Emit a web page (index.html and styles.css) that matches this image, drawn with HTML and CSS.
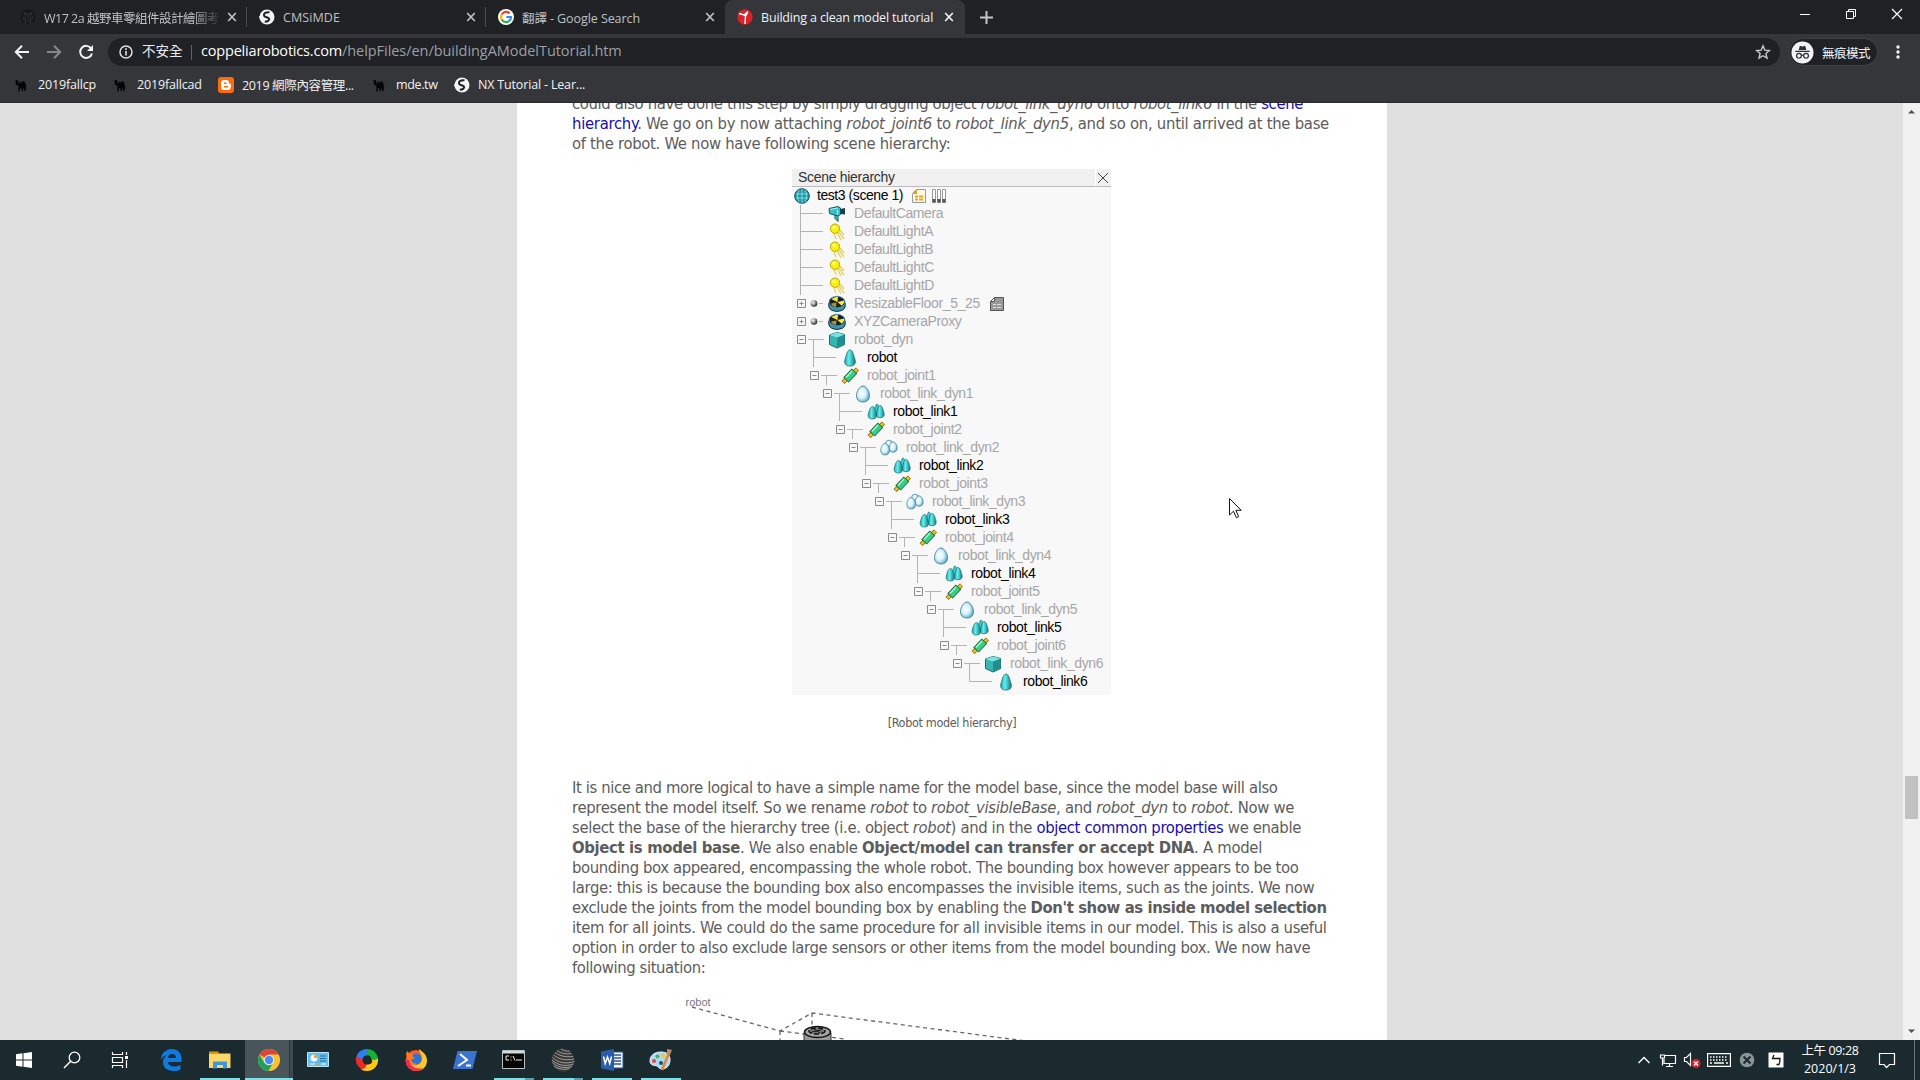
FILE: index.html
```html
<!DOCTYPE html>
<html lang="zh-Hant">
<head>
<meta charset="utf-8">
<title>Building a clean model tutorial</title>
<link rel="stylesheet" href="styles.css">
</head>
<body>
<svg class="defs" aria-hidden="true">
  <defs>
    <linearGradient id="gTeal" x1="0" x2="1"><stop offset="0" stop-color="#2aa9ab"/><stop offset=".4" stop-color="#5ff0ee"/><stop offset="1" stop-color="#15797f"/></linearGradient>
    <radialGradient id="gEgg" cx=".4" cy=".45" r=".65"><stop offset="0" stop-color="#fff"/><stop offset=".5" stop-color="#d6f1fa"/><stop offset="1" stop-color="#3f9cc0"/></radialGradient>
    <radialGradient id="gBall" cx=".35" cy=".35" r=".7"><stop offset="0" stop-color="#fff"/><stop offset="1" stop-color="#222"/></radialGradient>
    <symbol id="close" viewBox="0 0 10 10"><path d="M1.2 1l7.6 8M8.800 1l-7.600 8" stroke="currentColor" stroke-width="1.700" fill="none"/></symbol>
    <symbol id="globe" viewBox="0 0 16 16"><circle cx="8" cy="8" r="7.500" fill="#f1f3f4"/><path d="M10.500 3.200C7 2.800 4.500 4.300 5 6.500c.4 1.800 4 1.500 5 3 .8 1.500-1 3-4.500 3.300" stroke="#202124" stroke-width="2" fill="none"/><path d="M0 7l4 1 2 3-1 3.500C2 13 .5 10 0 7z" fill="#f1f3f4"/></symbol>
    <symbol id="camel" viewBox="0 0 16 16"><path d="M1 3l3-1 1 2v3l2-3 2 1 2-2 2 3 1 4-1 5h-1l-1-4-1 4H9l-1-4-1 1-1 4H5V9L2 7V4z" fill="#050505"/></symbol>

    <symbol id="leaf" viewBox="0 0 30 18"><path d="M5.500 0v18M5.500 8.500H28" stroke="#b4b4b4" fill="none"/></symbol>
    <symbol id="end" viewBox="0 0 30 18"><path d="M5.500 0v8.500H28" stroke="#b4b4b4" fill="none"/></symbol>
    <symbol id="open" viewBox="0 0 30 18"><path d="M13 8.500H29M18.500 8.500V18" stroke="#b4b4b4" fill="none"/><path d="M2.500 4.500h8v8h-8zM4.500 8.500h4" stroke="#8a8a8a" fill="none"/></symbol>
    <symbol id="shut" viewBox="0 0 30 18"><path d="M24 8.500h4" stroke="#b4b4b4"/><path d="M2.500 4.500h8v8h-8zM4.500 8.500h4M6.500 6.500v4" stroke="#8a8a8a" fill="none"/><circle cx="19" cy="8.500" r="3.300" fill="url(#gBall)"/></symbol>

    <symbol id="camera" viewBox="0 0 18 18"><path d="M1 3.500l9-2 2.500 1.500v6.500L9.500 11 1.500 8.500z" fill="#3bbdc9" stroke="#145c66"/><path d="M12.500 4L17 3v6.500L12.500 9z" fill="#1a3e46"/><path d="M7 10v3.500l3 3V11z" fill="#3bbdc9" stroke="#145c66"/><path d="M2 4.500l8-1.500M9.500 5v5" stroke="#a9f2f4"/></symbol>
    <symbol id="light" viewBox="0 0 18 18"><path d="M6 11l2 5M9 9l4 8M11 9l5 7M12 7l4 5" stroke="#e7d05a" stroke-width="1.300"/><circle cx="7" cy="5.700" r="4.700" fill="#fff000" stroke="#aaa000" stroke-width=".9"/><circle cx="6" cy="4.500" r="1.600" fill="#ffffb0"/></symbol>
    <symbol id="dummy" viewBox="0 0 18 18"><path d="M.8 8v3.500c1 6.500 15.400 6.500 16.400 0V8z" fill="#3d93b5" stroke="#12303a"/><ellipse cx="9" cy="7" rx="8" ry="5.800" fill="#1b2226" stroke="#4a9cb8" stroke-width=".7"/><path d="M9.500 7L3.500 4.300C5 2.600 7.500 2 10 2z" fill="#ffe63a"/><path d="M9.500 7l6.500-1.500c.7 2.500-1 4-2.500 5z" fill="#ffe63a"/><path d="M8.500 7.500L3 8.500c.5 1.700 2 3 5 3.500z" fill="#ffe63a" opacity=".6"/></symbol>
    <symbol id="cube" viewBox="0 0 18 18"><path d="M1.500 4L9 1.500 16.500 3.500v10L9 17l-7.500-3.500z" fill="#36b5b2" stroke="#1b6d6d"/><path d="M9 6.500L16.500 3.500v10L9 17z" fill="#238e8e"/><path d="M1.500 4L9 1.500l7.500 2L9 6.500z" fill="#7be6e0"/></symbol>
    <symbol id="cone" viewBox="0 0 18 18"><path d="M9 1c2.500 0 3.300 4 5 9.500 1.200 4.500-1 6.500-5 6.500s-6.200-2-5-6.500C5.700 5 6.500 1 9 1z" fill="url(#gTeal)" stroke="#176a70" stroke-width=".8"/></symbol>
    <symbol id="cones" viewBox="0 0 18 18"><path d="M9.500 1c2 0 2 2 3 6l-3 4-3-3z" fill="#3fc9cb" stroke="#176a70" stroke-width=".6"/><path d="M13 2.500c2 0 3 3.500 4 7.500.7 3.200-1 4.700-4 4.700S9 13.200 9.700 10c1-4 1.500-7.500 3.300-7.500z" fill="url(#gTeal)" stroke="#176a70" stroke-width=".7"/><path d="M5.500 3.500c2 0 2.800 3.500 3.900 7.500.7 3.500-.9 5-3.900 5S.6 14.500 1.300 11c1-4 2.200-7.500 4.200-7.500z" fill="url(#gTeal)" stroke="#176a70" stroke-width=".7"/></symbol>
    <symbol id="egg" viewBox="0 0 18 18"><path d="M9 1c3.200 0 6.500 5.300 6.500 9.500S13 17 9 17s-6.500-2.300-6.500-6.500S5.800 1 9 1z" fill="url(#gEgg)" stroke="#46849c" stroke-width=".9"/></symbol>
    <symbol id="eggs" viewBox="0 0 18 18"><circle cx="9" cy="4.500" r="3.300" fill="url(#gEgg)" stroke="#46849c" stroke-width=".7"/><path d="M13.200 2.800c2 0 4 3.500 4 6.200s-1.700 4.300-4 4.300-4-1.600-4-4.300 2-6.200 4-6.200z" fill="url(#gEgg)" stroke="#46849c" stroke-width=".7"/><path d="M5.200 4.300c2.200 0 4.400 3.700 4.400 6.900s-1.800 4.800-4.400 4.800-4.400-1.600-4.400-4.800 2.200-6.900 4.400-6.900z" fill="url(#gEgg)" stroke="#46849c" stroke-width=".7"/></symbol>
    <symbol id="joint" viewBox="0 0 18 18"><path d="M2 15.500L16.500 2" stroke="#7a5a10" stroke-width="4.200"/><path d="M2.300 15.200L16.200 2.200" stroke="#f2c321" stroke-width="2.600"/><path d="M5 13L13.500 4" stroke="#1b5b3c" stroke-width="7.500"/><path d="M5.600 12.400L13 4.600" stroke="#35cf86" stroke-width="5.800"/><path d="M5 10.500L11 4" stroke="#a5f5cb" stroke-width="1.400"/></symbol>
  </defs>
</svg>

<header class="browser">
  <div class="tabs">
    <div class="tab">
      <svg class="fav" viewBox="0 0 16 16"><circle cx="8" cy="8" r="7.500" fill="#15171a"/><path d="M5.500 15v-3c-2.500 0-2-2-3-2.500M10.500 15v-3.500C13 11 13 6 11.500 5.500V3.500L9.500 4.500h-3l-2-1v2C3 6 3 11 6 11.500" fill="#202124" stroke="#303134"/></svg>
      <span class="title t1">W17 2a 越野車零組件設計繪圖考</span><svg class="x"><use href="#close"/></svg>
    </div>
    <div class="tab">
      <svg class="fav"><use href="#globe"/></svg>
      <span class="title">CMSiMDE</span><svg class="x"><use href="#close"/></svg>
    </div>
    <div class="tab last">
      <svg class="fav" viewBox="0 0 16 16"><circle cx="8" cy="8" r="8" fill="#fff"/><g fill="none" stroke-width="2.200"><path d="M11.600 4.400A5 5 0 0 0 3.800 5.300" stroke="#ea4335"/><path d="M3.800 5.300a5 5 0 0 0 0 5.400" stroke="#fbbc05"/><path d="M3.800 10.700a5 5 0 0 0 7.500 1.100" stroke="#34a853"/><path d="M11.300 11.800A5 5 0 0 0 13 8H8.300" stroke="#4285f4"/></g></svg>
      <span class="title t3">翻譯 - Google Search</span><svg class="x"><use href="#close"/></svg>
    </div>
    <div class="tab active">
      <svg class="fav" viewBox="0 0 16 16"><circle cx="8" cy="8" r="7.700" fill="#d8232a"/><path d="M2 4.500l5 1.500 4-3.500M7 6l1.500 1L8 15M8.500 7l2-3" stroke="#fff" stroke-width="1.400" fill="none"/></svg>
      <span class="title t4">Building a clean model tutorial</span><svg class="x"><use href="#close"/></svg>
    </div>
    <svg class="plus" viewBox="0 0 13 13"><path d="M6.500 0v13M0 6.500h13" stroke="#c3c5c8" stroke-width="2"/></svg>
    <div class="win">
      <svg viewBox="0 0 46 28"><path d="M18 14.500h10" stroke="#fff"/></svg>
      <svg viewBox="0 0 46 28"><path d="M18.500 11.500h7v7h-7zM20.500 11v-1.500h7v7H26" stroke="#fff" fill="none"/></svg>
      <svg viewBox="0 0 46 28"><path d="M18 9l10 10M28 9L18 19" stroke="#fff" stroke-width="1.200"/></svg>
    </div>
  </div>
  <div class="toolbar">
    <svg class="nav" viewBox="0 0 16 16"><path d="M15 8H2M8 1.800L1.800 8 8 14.200" stroke="#f1f3f4" stroke-width="2" fill="none"/></svg>
    <svg class="nav" viewBox="0 0 16 16"><path d="M1 8h13M8 1.800L14.200 8 8 14.200" stroke="#85878a" stroke-width="2" fill="none"/></svg>
    <svg class="nav" viewBox="0 0 16 16"><path d="M13.200 4.500A6 6 0 1 0 14 9.500" stroke="#f1f3f4" stroke-width="2" fill="none"/><path d="M15 1v6H9z" fill="#f1f3f4"/></svg>
    <div class="omni">
      <svg class="info" viewBox="0 0 14 14"><circle cx="7" cy="7" r="6" stroke="#dfe1e5" stroke-width="1.500" fill="none"/><path d="M7 6v4.500M7 3.300v1.600" stroke="#dfe1e5" stroke-width="1.600"/></svg>
      <span class="warn">不安全</span><i class="bar"></i>
      <span class="host">coppeliarobotics.com</span><span class="path">/helpFiles/en/buildingAModelTutorial.htm</span>
      <svg class="star" viewBox="0 0 16 16"><path d="M8 1.800l1.800 4.300 4.600.4-3.500 3 1.100 4.600L8 11.700l-4 2.400 1.100-4.600-3.500-3 4.600-.4z" stroke="#c7c9cc" stroke-width="1.400" fill="none"/></svg>
    </div>
    <div class="incog">
      <svg viewBox="0 0 24 24"><circle cx="12" cy="12" r="11.500" fill="#f1f3f4"/><path d="M8 9.500L9.200 5l2.800.8 2.800-.8L16 9.500zM4.500 10.300h15v1.200h-15z" fill="#303134"/><g fill="none" stroke="#303134" stroke-width="1.300"><circle cx="8.300" cy="15.500" r="2.500"/><circle cx="15.700" cy="15.500" r="2.500"/><path d="M10.800 15c.8-.5 1.600-.5 2.400 0"/></g></svg>
      <span>無痕模式</span>
    </div>
    <svg class="dots" viewBox="0 0 4 14"><circle cx="2" cy="2" r="1.700"/><circle cx="2" cy="7" r="1.700"/><circle cx="2" cy="12" r="1.700"/></svg>
  </div>
  <nav class="bookmarks">
    <a><svg class="cm"><use href="#camel"/></svg><span>2019fallcp</span></a>
    <a><svg class="cm"><use href="#camel"/></svg><span>2019fallcad</span></a>
    <a><svg viewBox="0 0 16 16"><rect width="16" height="16" rx="3" fill="#ff6a0b"/><path d="M6 3h2.500C10.500 3 11 4 11 6.500c1.500 0 2 .5 2 2 0 3-1 4.500-3 4.500H6c-2 0-3-1-3-3V6c0-2 1-3 3-3z" fill="#fff"/><path d="M6 6.300h2.500M6 9.800h4" stroke="#ff6a0b" stroke-width="1.400"/></svg><span class="cjk">2019 網際內容管理...</span></a>
    <a><svg class="cm"><use href="#camel"/></svg><span class="mde">mde.tw</span></a>
    <a><svg><use href="#globe"/></svg><span>NX Tutorial - Lear...</span></a>
  </nav>
</header>

<main class="view">
  <article class="page">
    <div class="para">
      <p class="a1">could also have done this step by simply dragging object <i>robot_link_dyn6</i> onto <i>robot_link6</i> in the <a>scene</a></p>
      <p class="a2"><a>hierarchy</a>. We go on by now attaching <i>robot_joint6</i> to <i>robot_link_dyn5</i>, and so on, until arrived at the base</p>
      <p class="a3">of the robot. We now have following scene hierarchy:</p>
    </div>
    <section class="panel">
      <div class="phead"><span>Scene hierarchy</span><svg viewBox="0 0 16 17"><path d="M0 17V0" stroke="#fff" stroke-width="2"/><path d="M3 4l10 10M13 4L3 14" stroke="#444"/></svg></div>
      <div class="scene">
        <svg viewBox="0 0 16 16"><circle cx="8" cy="8" r="7.300" fill="#229aaa" stroke="#14525e"/><path d="M2 6h12M2 10h12M8 1v14M5 2C3 6 3 10 5 14M11 2c2 4 2 8 0 12" stroke="#a5eef0" stroke-width=".7" fill="none"/></svg>
        <span>test3 (scene 1)</span>
        <svg class="note" viewBox="0 0 14 14"><path d="M4.500.5h9v13H.5v-9z" fill="#fff8e0" stroke="#999"/><path d="M5 .5v4.500H.5z" fill="#e89a1c"/><path d="M3 7.500h3m1 0h4M3 10.500h3m1 0h4" stroke="#eba21f" stroke-width="1.800"/></svg>
        <svg class="note" viewBox="0 0 14 14"><path d="M.5.500h3v13h-3zM5.500.500h3v13h-3zM10.500.500h3v13h-3z" fill="#fff" stroke="#999"/><path d="M.5 10h3v3.500h-3zM5.500 10h3v3.500h-3zM10.500 10h3v3.500h-3z" fill="#555"/></svg>
      </div>
      <ul class="tree">
        <li class="row"><svg class="g"><use href="#leaf"/></svg><svg class="ic"><use href="#camera"/></svg><span>DefaultCamera</span></li>
        <li class="row"><svg class="g"><use href="#leaf"/></svg><svg class="ic"><use href="#light"/></svg><span>DefaultLightA</span></li>
        <li class="row"><svg class="g"><use href="#leaf"/></svg><svg class="ic"><use href="#light"/></svg><span>DefaultLightB</span></li>
        <li class="row"><svg class="g"><use href="#leaf"/></svg><svg class="ic"><use href="#light"/></svg><span>DefaultLightC</span></li>
        <li class="row"><svg class="g"><use href="#leaf"/></svg><svg class="ic"><use href="#light"/></svg><span>DefaultLightD</span></li>
        <li class="row"><svg class="g"><use href="#shut"/></svg><svg class="ic"><use href="#dummy"/></svg><span class="wide">ResizableFloor_5_25</span><svg class="note script" viewBox="0 0 14 14"><path d="M4.500.5h9v13H.5v-9z" fill="#999" stroke="#555"/><path d="M4.500.5v4h-4z" fill="#fff" stroke="#555"/><path d="M3 7.500h3m1 0h4M3 10.500h3m1 0h4" stroke="#ddd"/></svg></li>
        <li class="row"><svg class="g"><use href="#shut"/></svg><svg class="ic"><use href="#dummy"/></svg><span>XYZCameraProxy</span></li>
        <li class="row"><svg class="g"><use href="#open"/></svg><svg class="ic"><use href="#cube"/></svg><span>robot_dyn</span></li>
        <li class="row vis d1"><svg class="g"><use href="#leaf"/></svg><svg class="ic"><use href="#cone"/></svg><span>robot</span></li>
        <li class="row d1"><svg class="g"><use href="#open"/></svg><svg class="ic"><use href="#joint"/></svg><span>robot_joint1</span></li>
        <li class="row d2"><svg class="g"><use href="#open"/></svg><svg class="ic"><use href="#egg"/></svg><span>robot_link_dyn1</span></li>
        <li class="row vis d3"><svg class="g"><use href="#leaf"/></svg><svg class="ic"><use href="#cones"/></svg><span>robot_link1</span></li>
        <li class="row d3"><svg class="g"><use href="#open"/></svg><svg class="ic"><use href="#joint"/></svg><span>robot_joint2</span></li>
        <li class="row d4"><svg class="g"><use href="#open"/></svg><svg class="ic"><use href="#eggs"/></svg><span>robot_link_dyn2</span></li>
        <li class="row vis d5"><svg class="g"><use href="#leaf"/></svg><svg class="ic"><use href="#cones"/></svg><span>robot_link2</span></li>
        <li class="row d5"><svg class="g"><use href="#open"/></svg><svg class="ic"><use href="#joint"/></svg><span>robot_joint3</span></li>
        <li class="row d6"><svg class="g"><use href="#open"/></svg><svg class="ic"><use href="#eggs"/></svg><span>robot_link_dyn3</span></li>
        <li class="row vis d7"><svg class="g"><use href="#leaf"/></svg><svg class="ic"><use href="#cones"/></svg><span>robot_link3</span></li>
        <li class="row d7"><svg class="g"><use href="#open"/></svg><svg class="ic"><use href="#joint"/></svg><span>robot_joint4</span></li>
        <li class="row d8"><svg class="g"><use href="#open"/></svg><svg class="ic"><use href="#egg"/></svg><span>robot_link_dyn4</span></li>
        <li class="row vis d9"><svg class="g"><use href="#leaf"/></svg><svg class="ic"><use href="#cones"/></svg><span>robot_link4</span></li>
        <li class="row d9"><svg class="g"><use href="#open"/></svg><svg class="ic"><use href="#joint"/></svg><span>robot_joint5</span></li>
        <li class="row d10"><svg class="g"><use href="#open"/></svg><svg class="ic"><use href="#egg"/></svg><span>robot_link_dyn5</span></li>
        <li class="row vis d11"><svg class="g"><use href="#leaf"/></svg><svg class="ic"><use href="#cones"/></svg><span>robot_link5</span></li>
        <li class="row d11"><svg class="g"><use href="#open"/></svg><svg class="ic"><use href="#joint"/></svg><span>robot_joint6</span></li>
        <li class="row d12"><svg class="g"><use href="#open"/></svg><svg class="ic"><use href="#cube"/></svg><span>robot_link_dyn6</span></li>
        <li class="row vis d13"><svg class="g"><use href="#end"/></svg><svg class="ic"><use href="#cone"/></svg><span>robot_link6</span></li>
      </ul>
    </section>
    <p class="caption">[Robot model hierarchy]</p>
    <div class="para">
      <p class="b1">It is nice and more logical to have a simple name for the model base, since the model base will also</p>
      <p class="b2">represent the model itself. So we rename <i>robot</i> to <i>robot_visibleBase</i>, and <i>robot_dyn</i> to <i>robot</i>. Now we</p>
      <p class="b3">select the base of the hierarchy tree (i.e. object <i>robot</i>) and in the <a>object common properties</a> we enable</p>
      <p class="b4"><b class="s1">Object is model base</b>. We also enable <b class="s2">Object/model can transfer or accept DNA</b>. A model</p>
      <p class="b5">bounding box appeared, encompassing the whole robot. The bounding box however appears to be too</p>
      <p class="b5">large: this is because the bounding box also encompasses the invisible items, such as the joints. We now</p>
      <p class="b5">exclude the joints from the model bounding box by enabling the <b class="s3">Don't show as inside model selection</b></p>
      <p class="b6">item for all joints. We could do the same procedure for all invisible items in our model. This is also a useful</p>
      <p class="b3">option in order to also exclude large sensors or other items from the model bounding box. We now have</p>
      <p class="b7">following situation:</p>
    </div>
    <svg class="robot" viewBox="685 990 400 60">
      <text x="685.500" y="1006">robot</text>
      <g fill="none" stroke="#666" stroke-width="1.300" stroke-dasharray="4 3.500"><path d="M692 1007L780 1031 812 1013 1022 1040.500M780 1031l65 8M812 1013v14M780 1031v12"/></g>
      <path d="M804 1033v17h27v-17z" fill="#999" stroke="#333"/><ellipse cx="817.500" cy="1032" rx="13" ry="5.500" fill="#a5a5a5" stroke="#111" stroke-width="1.500"/><ellipse cx="817" cy="1031" rx="8" ry="3" fill="#777" stroke="#111" stroke-width="1.500" stroke-dasharray="5 2"/><path d="M812 1032l9-2M814 1029l6 4" stroke="#111"/>
    </svg>
  </article>
  <div class="scroll"><svg class="arr" viewBox="0 0 17 17"><path d="M5 10.500h7L8.500 7z" fill="#505050"/></svg><i class="thumb"></i><svg class="arr" viewBox="0 0 17 17"><path d="M5 6.500h7L8.500 10z" fill="#505050"/></svg></div>
</main>

<footer class="taskbar">
  <div class="slot sys"><svg viewBox="0 0 24 24"><path d="M4 6.300l6.500-1V11.500H4zM11.500 5.200L20 4v7.500h-8.500zM4 12.500h6.500v6.200L4 17.800zM11.500 12.500H20V20l-8.500-1.200z" fill="#fff"/></svg></div>
  <div class="slot sys"><svg viewBox="0 0 24 24"><circle cx="14.500" cy="9.500" r="5.300" stroke="#fff" stroke-width="1.300" fill="none"/><path d="M10.700 13.300L4 20" stroke="#fff" stroke-width="1.500"/></svg></div>
  <div class="slot sys"><svg viewBox="0 0 24 24"><path d="M4.500 4v2.500h10V4M4.500 20v-2.500h10V20M4.500 9.500h10v5h-10zM18.500 4v3M18.500 12v8" stroke="#fff" stroke-width="1.200" fill="none"/><path d="M17 8h3v3h-3z" fill="#fff"/></svg></div>
  <div class="slot edge"><svg viewBox="0 0 24 24"><path d="M2 12C2 5 7 1 13 1c6 0 9.500 4.500 9.500 9.500V14H9c.3 3 3 4.500 6.500 4.500 2.500 0 4.500-.7 6-1.500v4.500c-2 1-4.500 1.500-7 1.500C8 23 4 19.500 4 14c0-3 1.500-5.500 4-7-3 .7-5 2.500-6 5zM9 10h8c0-2.500-1.500-4-4-4-2.300 0-3.700 1.700-4 4z" fill="#0f7be0"/></svg></div>
  <div class="slot on"><svg viewBox="0 0 24 24"><path d="M1 3.500h9l1.500 2H1z" fill="#d99a10"/><path d="M1 5.500h21.500V20H1z" fill="#fbd66b"/><path d="M5 20.500v-7h14v7h-4v-3.500H9v3.500z" fill="#3e97d8"/></svg></div>
  <div class="slot active"><svg viewBox="0 0 24 24"><circle cx="12" cy="12" r="11" fill="#fbc22b"/><path d="M12 12L2.500 6.500A11 11 0 0 1 21.500 6.500H12z" fill="#dc4437"/><path d="M12 12l-4.700 3L2.500 6.500A11 11 0 0 0 11.500 23l5-8z" fill="#1da160"/><path d="M12 7h9.700c2.500 7-1.700 15-10 16L16 15z" fill="#fbc22b"/><circle cx="12" cy="12" r="5.200" fill="#eee"/><circle cx="12" cy="12" r="4.200" fill="#4a8cf5"/></svg></div>
  <div class="slot"><svg viewBox="0 0 24 24"><path d="M1.500 4.500h21v14h-21z" fill="#5fbdf0" stroke="#bfe6fb"/><circle cx="8" cy="10" r="3.500" fill="#f5f9fc"/><path d="M8 10V6.500A3.500 3.500 0 0 1 11.500 10z" fill="#f2a33a"/><path d="M14 8h6M14 10.500h6M14 13h6" stroke="#2d6e9e"/><path d="M4 16h5M15 16h5" stroke="#fff"/><path d="M10 16h3" stroke="#f2a33a"/></svg></div>
  <div class="slot"><svg viewBox="0 0 24 24"><path d="M12 12L3 18A11 11 0 0 1 1 9l5-2z" fill="#ee2a24"/><path d="M3 17.500A11 11 0 0 0 12 23l4-6-9-9-6 2z" fill="#ee2a24"/><path d="M1.500 9C2.500 4 7 1 12 1l3 6-7 2-1 5C6 10 4 8.500 1.500 9z" fill="#2f7df6"/><path d="M11 1c6-.5 11 3.500 12 9l-5 7-2-6c0-3-2-4-5-4 2-2 2-4 0-6z" fill="#16b035"/><path d="M23 10c1 7-4 13-11 13-3 0-5-1-6-2 4 0 5-2 5.500-4.500 4 .5 6-1 6-5 2 1 4 .5 5.500-1.500z" fill="#ffc814"/><circle cx="12" cy="12" r="4.500" fill="#1a2a2f"/></svg></div>
  <div class="slot"><svg viewBox="0 0 24 24"><circle cx="12" cy="12.500" r="10.500" fill="#ff5a1f"/><path d="M12 23c6 0 11-4 11-10.500 0-4-2-7-5-9L15 1c0 4 3 5 3 9s-3 7-6 7-6-2-8-5c0 6 3 11 8 11z" fill="#ffc62b"/><circle cx="12" cy="11" r="5.500" fill="#2876d8"/><path d="M2 6l1-3 3 3 4-1-2 3 3 2-4 2 2 3 4 1c-4 3-9 0-9.500-5z" fill="#ff7a20"/><path d="M1.500 12C2 19 7 23 12 23c3 0 5-1 7-3-8 2-13-2-14-8z" fill="#f5294c"/></svg></div>
  <div class="slot"><svg viewBox="0 0 24 24"><path d="M4.500 3H24l-4.500 18H0z" fill="#3a74d0"/><path d="M7 6l7 6-9 6M13 17.500h5" stroke="#fff" stroke-width="2" fill="none"/></svg></div>
  <div class="slot on split"><svg viewBox="0 0 24 24"><path d="M.5 2.500h22v18h-22z" fill="#050505" stroke="#b9c0c4"/><path d="M1 3h21v2.500H1z" fill="#d5dadc"/><path d="M7 8H4v4h3M9 8.500v1m0 2v1M11 8l2 4.500M14 12h6" stroke="#eee" fill="none"/></svg></div>
  <div class="slot on split"><svg viewBox="0 0 24 24"><circle cx="12" cy="12" r="11.500" fill="#383838"/><g fill="none" stroke="#b9b9b9" stroke-width=".8"><path d="M4 4.500c4 3 10 5 18 4M2.500 7c5 4 12 6 20.500 4M1.500 9.500c5 5 13 7 22 4M1 12c5 5 13 7 21.500 4M1.500 14.500c5 5 12 6 19.500 4M3 18c4 3 9 4 15.500 2.500M6 2.500c4 3 9 4 14 3M10 1c3 2 6 2.500 8.500 2"/></g></svg></div>
  <div class="slot on"><svg viewBox="0 0 24 24"><path d="M12 4h11v16H12z" fill="#f5f7fb" stroke="#2b579a"/><path d="M14 7h7M14 10h7M14 13h7M14 16h7" stroke="#2b579a" stroke-width="1.400"/><path d="M1 3.500L14 1v22L1 20.500z" fill="#2a5caa"/><path d="M3.500 8.500l1.700 7L7.500 9l2.200 6.500 1.800-7" stroke="#fff" stroke-width="1.500" fill="none"/></svg></div>
  <div class="slot on"><svg viewBox="0 0 24 24"><path d="M1 13C1 7 6 4 12 4c6 0 9 3 9 8s-3 9-8 9c-3 0-3-2-5-3s-7 0-7-5z" fill="#a9d9f3" stroke="#e8f6fd"/><circle cx="5" cy="13" r="2" fill="#e14a3b"/><circle cx="8.500" cy="8.500" r="2" fill="#59b04c"/><circle cx="14" cy="7.500" r="2" fill="#f3c52e"/><circle cx="12" cy="15" r="2" fill="#24506c"/><path d="M20 5l-7 17" stroke="#e8842a" stroke-width="2.500"/><path d="M18 1l5 1-2 5-3-1z" fill="#b98c63"/></svg></div>
  <div class="tray">
    <svg class="w14" viewBox="0 0 14 14"><path d="M1.500 10L7 4.500l5.500 5.500" stroke="#fff" stroke-width="1.400" fill="none"/></svg>
    <svg class="w18 net" viewBox="0 0 18 18"><path d="M6 4.500h10.500v8H5V8M10.500 12.500v3M7 15.500h7M1.500 4h4v3h-4zM3.500 7v7.500" stroke="#fff" stroke-width="1.200" fill="none"/></svg>
    <svg class="w18 vol" viewBox="0 0 18 18"><path d="M1.500 6.500h2l4-4v12l-4-4h-2z" stroke="#fff" stroke-width="1.200" fill="none"/><circle cx="13" cy="12.500" r="4.500" fill="#e0202c"/><path d="M11 10.500l4 4M15 10.500l-4 4" stroke="#fff" stroke-width="1.300"/></svg>
    <svg class="kb" viewBox="0 0 24 14"><path d="M.6.600h22.800v12.800H.6z" stroke="#fff" stroke-width="1.200" fill="none"/><path d="M3 4h18M3 7h18" stroke="#fff" stroke-width="1.500" stroke-dasharray="1.500 1.500"/><path d="M3 10h2m2 0h10m2 0h2" stroke="#fff" stroke-width="1.300"/></svg>
    <svg class="w16 off" viewBox="0 0 16 16"><circle cx="8" cy="8" r="7.300" fill="#8d9496"/><path d="M4.500 4.500l7 7M11.500 4.500l-7 7" stroke="#1d2a2f" stroke-width="2"/></svg>
    <svg class="w16 ime" viewBox="0 0 16 16"><path d="M.5.500h15v15H.5z" fill="#fff"/><path d="M6 3L4.500 6.500H12c0 3-.3 5-1 6H8.500" stroke="#111" stroke-width="1.300" fill="none"/></svg>
    <div class="clock"><span class="time">上午 09:28</span><span>2020/1/3</span></div>
    <svg class="w18 act" viewBox="0 0 18 18"><path d="M1.500 2.500h15v11h-5L8.500 16.500 6 13.500H1.500z" stroke="#fff" stroke-width="1.200" fill="none"/></svg>
  </div>
</footer>
<svg class="cursor" viewBox="0 0 14 21"><path d="M.5.500v16.500l4-3.800 2.800 6.500 2.400-1-2.800-6.400h5.300z" fill="#fff" stroke="#111"/></svg>
</body>
</html>
```
FILE: styles.css
```css
* { box-sizing: border-box; }
body { margin: 0; width: 1920px; height: 1080px; overflow: hidden; display: flex; flex-direction: column; background: #e0e0e0; font-family: "Open Sans", "Noto Sans CJK TC", sans-serif; font-size: 12.5px; }
p, ul { margin: 0; padding: 0; }
svg { flex: none; display: block; }
.defs { position: absolute; width: 0; height: 0; }

.browser { height: 103px; flex: none; background: #35363a; border-bottom: 1px solid #28292c; }
.tabs { height: 34px; display: flex; align-items: center; background: #202124; padding-left: 8px; }
.tab { width: 239px; height: 34px; display: flex; align-items: center; padding: 0 10px 0 12px; background: linear-gradient(#4a4c50, #4a4c50) right center / 1px 20px no-repeat; color: #bdc1c6; }
.tab.last { background: none; }
.tab.active { width: 240px; background: #35363a; color: #f1f3f4; border-radius: 8px 8px 0 0; padding-right: 11px; }
.fav { width: 16px; height: 16px; }
.title { flex: 1; margin-left: 8px; white-space: nowrap; overflow: hidden; letter-spacing: .08px; }
.t1 { letter-spacing: -.5px; -webkit-mask-image: linear-gradient(90deg, #000 150px, transparent 178px); }
.t3 { letter-spacing: -.08px; }
.t4 { letter-spacing: -.17px; }
.x { width: 10px; height: 10px; }
.plus { width: 13px; height: 13px; margin-left: 15px; }
.win { margin-left: auto; display: flex; align-self: flex-start; }
.win svg { width: 46px; height: 28px; }

.toolbar { height: 36px; display: flex; align-items: center; padding-left: 14px; }
.nav { width: 16px; height: 16px; margin-right: 16px; }
.omni { width: 1672px; height: 28px; margin-left: -2px; border-radius: 14px; background: #202124; display: flex; align-items: center; padding: 0 9px 0 11px; font-size: 14.5px; line-height: 20px; color: #e8eaed; }
.omni span { margin-top: -2px; }
.info { width: 14px; height: 14px; }
.omni .warn { margin-left: 9px; font-size: 13.5px; width: 41px; }
.bar { width: 1px; height: 15px; background: #5f6368; margin: 0 9px 0 8px; }
.host { letter-spacing: -.19px; color: #fff; }
.path { letter-spacing: -.05px; color: #9aa0a6; }
.star { width: 16px; height: 16px; margin-left: auto; }
.incog { width: 89px; height: 28px; margin-left: 9px; border: 1px solid #3f4044; border-radius: 14px; background: #202124; display: flex; align-items: center; gap: 8px; color: #f1f3f4; letter-spacing: -.5px; padding-left: 1px; }
.incog svg { width: 23px; height: 23px; }
.dots { width: 4px; height: 14px; margin-left: 18px; fill: #f1f3f4; }

.bookmarks { height: 29px; display: grid; grid-template-columns: 99px 105px 154px 82px 160px; align-items: center; padding-left: 14px; color: #f1f3f4; letter-spacing: -.17px; }
.bookmarks a { display: flex; align-items: center; gap: 8px; white-space: nowrap; }
.bookmarks svg { width: 16px; height: 16px; }
.bookmarks .cm { width: 14px; height: 14px; margin-right: 2px; }
.cjk, .mde { letter-spacing: -.35px; }

.view { flex: 1; min-height: 0; display: flex; overflow: hidden; padding-left: 517px; }
.page { width: 870px; background: #fff; padding: 0 55px; color: #5c5c5c; overflow: hidden; }
.page > .para:first-child { margin-top: -9px; }
.para { font: 16.5px/20px "DejaVu Sans Condensed", "DejaVu Sans", sans-serif; white-space: nowrap; }
.para p { height: 20px; }
.para a { color: #1a0dab; }
.a1 { letter-spacing: -.361px; }
.a2 { letter-spacing: -.271px; }
.a3 { letter-spacing: -.302px; }
.b1 { letter-spacing: -.379px; }
.b2 { letter-spacing: -.322px; }
.b3 { letter-spacing: -.355px; }
.b4 { letter-spacing: -.28px; }
.b5 { letter-spacing: -.378px; }
.b6 { letter-spacing: -.34px; }
.b7 { letter-spacing: -.39px; }
.s1 { letter-spacing: -.336px; }
.s2 { letter-spacing: -.288px; }
.s3 { letter-spacing: -.397px; }
.caption { margin: 18px 0 45px; text-align: center; font: 12.5px/20px "DejaVu Sans Condensed", "DejaVu Sans", sans-serif; letter-spacing: -.34px; }

.panel { width: 319px; height: 526px; margin: 15px 0 0 220px; background: #f8f8f8; font: 14px/16px "Liberation Sans", Arial, sans-serif; letter-spacing: -.38px; white-space: nowrap; }
.panel span { margin-top: -2px; }
.phead { height: 18px; display: flex; justify-content: space-between; align-items: center; padding-left: 6px; background: #f0f0f0; border-bottom: 1px solid #bbb; color: #333; letter-spacing: -.3px; }
.phead svg { width: 16px; height: 17px; }
.scene { height: 18px; display: flex; align-items: center; padding-left: 2px; color: #000; }
.scene > svg { width: 16px; height: 16px; margin-top: -1px; }
.scene span { width: 95px; margin-left: 7px; letter-spacing: -.44px; }
.scene .note { width: 14px; height: 14px; margin-right: 6px; }
.tree { list-style: none; }
.row { height: 18px; display: flex; align-items: center; padding-left: 3px; color: #a6a6a6; }
.vis { color: #000; }
.g { width: 30px; height: 18px; }
.ic { width: 18px; height: 18px; margin: -1px 8px 0 3px; }
.row .wide { letter-spacing: -.33px; }
.script { width: 14px; height: 14px; margin-left: 10px; }
.d1 { padding-left: 16px; }
.d2 { padding-left: 29px; }
.d3 { padding-left: 42px; }
.d4 { padding-left: 55px; }
.d5 { padding-left: 68px; }
.d6 { padding-left: 81px; }
.d7 { padding-left: 94px; }
.d8 { padding-left: 107px; }
.d9 { padding-left: 120px; }
.d10 { padding-left: 133px; }
.d11 { padding-left: 146px; }
.d12 { padding-left: 159px; }
.d13 { padding-left: 172px; }

.robot { width: 400px; height: 60px; margin: 12px 0 0 113px; }
.robot text { font: 11px "Liberation Sans", Arial, sans-serif; fill: #777; }
.scroll { width: 17px; margin-left: auto; background: #f1f1f1; display: flex; flex-direction: column; }
.arr { width: 17px; height: 17px; }
.thumb { width: 13px; height: 43px; margin: 656px 2px auto; background: #c1c1c1; }

.taskbar { height: 40px; flex: none; display: flex; background: #1a2a2f; color: #fff; }
.slot { width: 48px; height: 40px; margin-right: 1px; display: flex; align-items: center; justify-content: center; }
.slot svg { width: 24px; height: 24px; }
.sys { margin-right: 0; }
.edge { margin-left: 3px; }
.on { background: linear-gradient(#7fe0ea, #7fe0ea) center bottom / 40px 2px no-repeat; }
.on.split { background: linear-gradient(90deg, #7fe0ea 31px, #5b9fa8 31px) center bottom / 40px 2px no-repeat; }
.slot.active { background: linear-gradient(#7fe0ea, #7fe0ea) center bottom / 48px 2px no-repeat, linear-gradient(90deg, #48565b 44px, #2c3b40 44px, #2c3b40 45px, #3d4a4f 45px); }
.tray { margin-left: auto; width: 284px; display: flex; align-items: center; padding-left: 1px; border-right: 5px solid transparent; background: linear-gradient(#68757a, #68757a) right / 1px 40px no-repeat; }
.w14 { width: 14px; height: 14px; }
.w16 { width: 16px; height: 16px; }
.w18 { width: 18px; height: 18px; }
.net { margin-left: 8px; }
.vol { margin-left: 6px; }
.kb { width: 24px; height: 14px; margin-left: 6px; }
.off { margin-left: 8px; }
.ime { margin-left: 13px; }
.clock { width: 62px; margin-left: 15px; display: flex; flex-direction: column; align-items: center; line-height: 18px; }
.time { letter-spacing: -.39px; }
.act { margin-left: 17px; }
.cursor { position: absolute; left: 1229px; top: 498px; width: 14px; height: 21px; }
```
